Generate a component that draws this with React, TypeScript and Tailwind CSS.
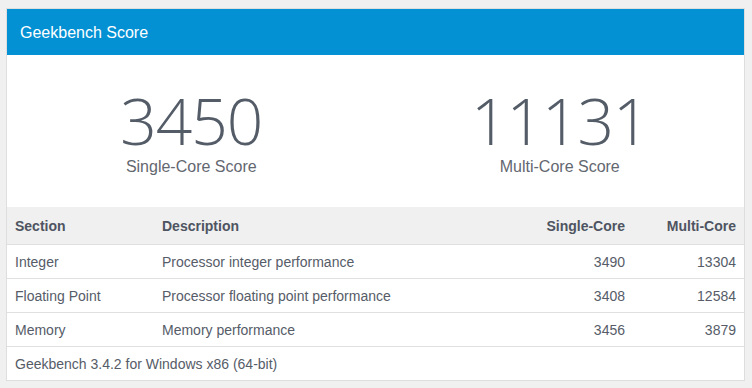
const rows = [
  { section: "Integer", desc: "Processor integer performance", single: "3490", multi: "13304" },
  { section: "Floating Point", desc: "Processor floating point performance", single: "3408", multi: "12584" },
  { section: "Memory", desc: "Memory performance", single: "3456", multi: "3879" },
];

const App = () => {
  return (
    <div className="w-[752px] h-[388px] bg-[#f0f0f0] pt-[8px] pl-[6px] font-['Liberation_Sans',Arial,sans-serif]">
      <section className="w-[739px] border border-[#dedede] bg-white">
        <div className="h-[46px] bg-[#0391d4] flex items-center pl-[13px] pt-[1px] text-white text-[16px]">
          Geekbench Score
        </div>

        <div className="h-[152px] grid grid-cols-2 text-center">
          <div className="flex flex-col items-center pt-[34px]">
            <div className="font-['Open_Sans',sans-serif] font-light text-[64px] leading-[64px] text-[#545c68] tracking-[-1px]">
              3450
            </div>
            <div className="text-[16px] leading-[20px] text-[#636770] mt-[4px]">Single-Core Score</div>
          </div>
          <div className="flex flex-col items-center pt-[34px]">
            <div className="font-['Open_Sans',sans-serif] font-light text-[64px] leading-[64px] text-[#545c68] tracking-[-1px]">
              11131
            </div>
            <div className="text-[16px] leading-[20px] text-[#636770] mt-[4px]">Multi-Core Score</div>
          </div>
        </div>

        <div className="text-[14px] text-[#565c68]">
          <div className="grid grid-cols-[147px_1fr_120px_111px] h-[38px] items-center pt-[1px] bg-[#f0f0f0] border-b border-[#e0e0e0] font-bold text-[#4e5461]">
            <div className="px-2">Section</div>
            <div className="px-2">Description</div>
            <div className="px-2 text-right">Single-Core</div>
            <div className="px-2 text-right">Multi-Core</div>
          </div>
          {rows.map((r) => (
            <div
              key={r.section}
              className="grid grid-cols-[147px_1fr_120px_111px] h-[34px] items-center pt-[1px] border-b border-[#e0e0e0]"
            >
              <div className="px-2">{r.section}</div>
              <div className="px-2">{r.desc}</div>
              <div className="px-2 text-right">{r.single}</div>
              <div className="px-2 text-right">{r.multi}</div>
            </div>
          ))}
          <div className="h-[33px] flex items-center pt-[1px] px-2">Geekbench 3.4.2 for Windows x86 (64-bit)</div>
        </div>
      </section>
    </div>
  );
};

export default App;
